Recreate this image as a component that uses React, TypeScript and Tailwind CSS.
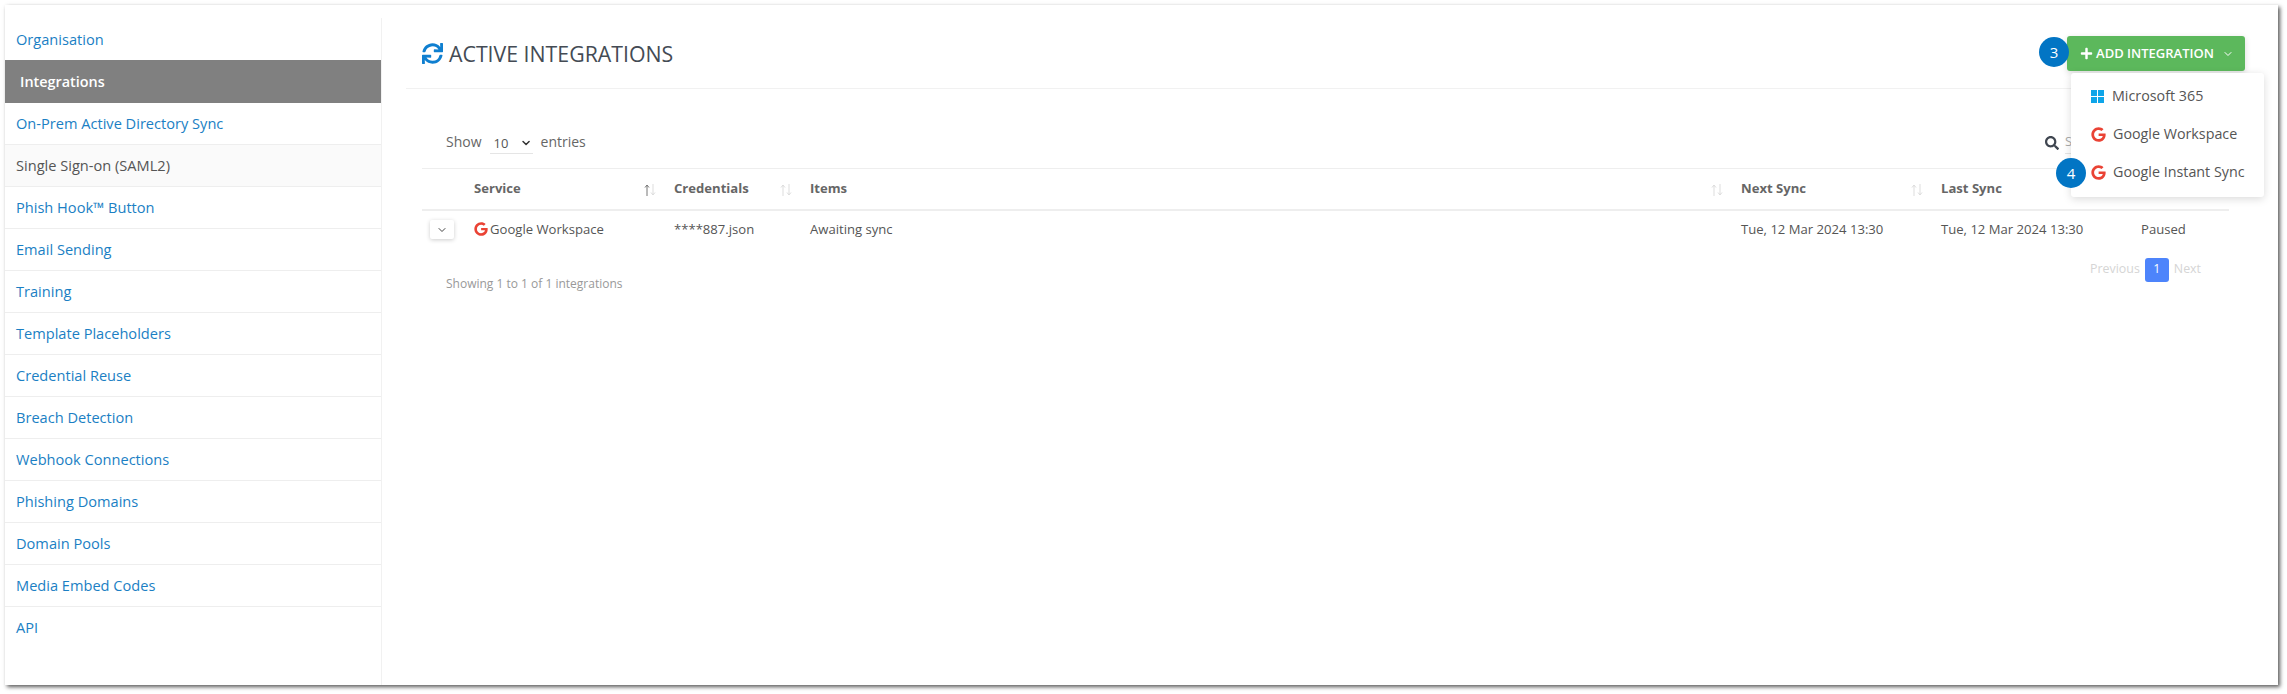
import { ChevronDown } from "lucide-react";
import { FaGoogle, FaPlus, FaSearch, FaSync } from "react-icons/fa";

const navItems = [
  { label: "Organisation" },
  { label: "Integrations", active: true },
  { label: "On-Prem Active Directory Sync" },
  { label: "Single Sign-on (SAML2)", muted: true },
  { label: "Phish Hook™ Button" },
  { label: "Email Sending" },
  { label: "Training" },
  { label: "Template Placeholders" },
  { label: "Credential Reuse" },
  { label: "Breach Detection" },
  { label: "Webhook Connections" },
  { label: "Phishing Domains" },
  { label: "Domain Pools" },
  { label: "Media Embed Codes" },
  { label: "API" },
];

function SortArrows({ active }: { active?: boolean }) {
  return (
    <svg width="12" height="14" viewBox="0 0 12 14" fill="none" strokeWidth="1" className="mt-[3px]">
      <path d="M3 13V2M1 4.5 3 2l2 2.5" stroke={active ? "#777777" : "#dddddd"} />
      <path d="M9 1v11M7 9.5 9 12l2-2.5" stroke="#dddddd" />
    </svg>
  );
}

function Badge({ n, className }: { n: number; className: string }) {
  return (
    <div className={`absolute flex h-[30px] w-[30px] items-center justify-center rounded-full bg-[#0275c4] text-[15px] text-white ${className}`}>
      {n}
    </div>
  );
}

function HeaderCell({ label, width, sort, active }: { label: string; width: string; sort?: boolean; active?: boolean }) {
  return (
    <th className={`${width} pl-4 pr-[2px] text-left font-bold text-[#666666]`}>
      <div className="flex items-center justify-between">
        <span>{label}</span>
        {sort && <SortArrows active={active} />}
      </div>
    </th>
  );
}

export default function App() {
  return (
    <div className="h-[694px] w-[2287px] overflow-hidden bg-white pl-[5px] pt-[5px] font-['Open_Sans',sans-serif]">
      <div className="relative flex h-[680px] w-[2273px] bg-white pt-[13px] shadow-[2px_2px_4px_rgba(0,0,0,0.65)]">
        {/* Sidebar */}
        <nav className="h-full w-[377px] shrink-0 border-r border-[#f1f1f1] text-[14.6px]">
          {navItems.map((item, i) => (
            <div
              key={item.label}
              className={
                item.active
                  ? "flex h-[43px] items-center bg-[#808080] pl-[15px] text-[14.4px] font-semibold text-white"
                  : `flex h-[42px] items-center pl-[11px] ${i > 1 && i < 14 ? "border-b border-[#eeeeee]" : ""} ${i === 14 ? "pb-[1px]" : ""} ${i === 0 ? "pt-[1px]" : ""} ${item.muted ? "bg-[#fafafa] text-[#555555]" : "text-[#1b7fc4]"}`
              }
            >
              {item.label}
            </div>
          ))}
        </nav>

        {/* Main */}
        <main className="min-w-0 flex-1 pl-6 pt-[18px]">
          <div className="flex h-[35px] items-center justify-between pl-4 pr-[33px]">
            <h1 className="flex items-center gap-[6px] text-[21.3px] text-[#444b54]">
              <FaSync className="text-[21px] text-[#0f7fd0]" />
              ACTIVE INTEGRATIONS
            </h1>
            <button className="flex h-[35px] w-[178px] items-center justify-center rounded-[3px] bg-[#5cb85c] pl-[2px] text-[13px] font-semibold text-white shadow-[0_2px_6px_rgba(0,0,0,0.15)]">
              <FaPlus className="mr-[3px] text-[13px]" />
              ADD INTEGRATION
              <ChevronDown className="ml-[8px] h-3 w-3" />
            </button>
          </div>
          <div className="mt-[17px] mr-[30px] border-t border-[#f1f1f1]" />

          <div className="flex h-[79px] items-end justify-between pb-[14px] pl-10 pr-[153px] text-[14px] text-[#666666]">
            <div className="flex items-center">
              <span className="-mt-[4px]">Show</span>
              <div className="ml-2 flex h-[22px] w-[43px] items-center border-b border-[#e5e5e5] pl-1 text-[13px] text-[#555555]">
                <span className="mt-[2px]">10</span>
                <ChevronDown className="ml-3 h-[14px] w-[14px] text-[#333333]" strokeWidth={3} />
              </div>
              <span className="-mt-[4px] ml-2">entries</span>
            </div>
            <div className="flex items-center gap-[6px]">
              <FaSearch className="text-[14px] text-[#3f4650]" />
              <div className="h-[22px] w-[60px] border-b border-[#e5e5e5] text-[13px] text-[#aaaaaa]">Search</div>
            </div>
          </div>

          <div className="ml-4 w-[1807px]">
            <table className="w-full table-fixed border-collapse text-[13.1px] text-[#555555]">
              <thead>
                <tr className="h-[41px] border-y-2 border-t-[1px] border-y-[#eeeeee]">
                  <th className="w-[36px]" />
                  <HeaderCell label="Service" width="w-[200px]" sort active />
                  <HeaderCell label="Credentials" width="w-[136px]" sort />
                  <HeaderCell label="Items" width="w-[931px]" sort />
                  <HeaderCell label="Next Sync" width="w-[200px]" sort />
                  <HeaderCell label="Last Sync" width="w-[200px]" sort />
                  <HeaderCell label="Status" width="w-[104px]" />
                </tr>
              </thead>
              <tbody>
                <tr className="h-[39px]">
                  <td className="pl-2">
                    <div className="flex h-[19px] w-[24px] items-center justify-center rounded-[2px] bg-white shadow-[0_1px_4px_rgba(0,0,0,0.2)]">
                      <ChevronDown className="h-3 w-3 text-[#444444]" />
                    </div>
                  </td>
                  <td className="pl-4">
                    <div className="flex items-center gap-[2px]">
                      <FaGoogle className="text-[14px] text-[#ea4335]" />
                      Google Workspace
                    </div>
                  </td>
                  <td className="pl-4">****887.json</td>
                  <td className="pl-4">Awaiting sync</td>
                  <td className="pl-4">Tue, 12 Mar 2024 13:30</td>
                  <td className="pl-4">Tue, 12 Mar 2024 13:30</td>
                  <td className="pl-4">Paused</td>
                </tr>
              </tbody>
            </table>

            <div className="flex items-start justify-between pl-6 pr-7 pt-[9px]">
              <div className="pt-[17px] text-[12px] text-[#999999]">Showing 1 to 1 of 1 integrations</div>
              <div className="flex items-center gap-[5px] text-[12.4px] text-[#d5d5d5]">
                <span>Previous</span>
                <span className="flex h-6 w-6 items-center justify-center rounded-[3px] bg-[#4d84fb] text-white">1</span>
                <span>Next</span>
              </div>
            </div>
          </div>
        </main>

        {/* Add integration menu */}
        <div className="absolute left-[2066px] top-[68px] w-[193px] rounded-[3px] bg-white pb-[6px] pt-[4px] text-[14.3px] text-[#555555] shadow-[0_2px_8px_rgba(0,0,0,0.15)]">
          <div className="flex h-[38px] items-center pl-5">
            <svg width="13" height="13" viewBox="0 0 13 13" fill="#0ea5e9" className="mr-2">
              <rect width="6" height="6" />
              <rect x="7" width="6" height="6" />
              <rect y="7" width="6" height="6" />
              <rect x="7" y="7" width="6" height="6" />
            </svg>
            Microsoft 365
          </div>
          <div className="flex h-[38px] items-center pl-5">
            <FaGoogle className="mr-[7px] text-[15px] text-[#ea4335]" />
            Google Workspace
          </div>
          <div className="flex h-[38px] items-center pl-5">
            <FaGoogle className="mr-[7px] text-[15px] text-[#ea4335]" />
            Google Instant Sync
          </div>
        </div>
        <Badge n={3} className="left-[2034px] top-[32px]" />
        <Badge n={4} className="left-[2051px] top-[153px]" />
      </div>
    </div>
  );
}
